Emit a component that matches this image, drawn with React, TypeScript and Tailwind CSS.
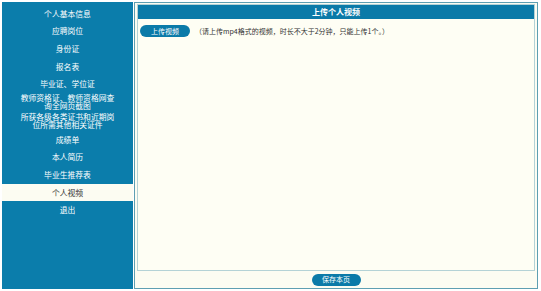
import React from "react";

const items: { label: string; lines?: string[] }[] = [
  { label: "个人基本信息" },
  { label: "应聘岗位" },
  { label: "身份证" },
  { label: "报名表" },
  { label: "毕业证、学位证" },
  { label: "", lines: ["教师资格证、教师资格网查", "询全网页截图"] },
  { label: "", lines: ["所获各级各类证书和近期岗", "位所需其他相关证件"] },
  { label: "成绩单" },
  { label: "本人简历" },
  { label: "毕业生推荐表" },
  { label: "个人视频" },
  { label: "退出" },
];

export default function App() {
  const font = { fontFamily: '"Noto Sans CJK SC", "Noto Sans", sans-serif' };
  return (
    <div
      className="w-[541px] h-[291px] bg-white pt-[2px] pl-[2px] pr-[3px] pb-[2px] flex"
      style={font}
    >
      <aside className="w-[131px] h-full bg-[#0b7dab] pt-[3px] flex flex-col">
        {items.map((it, i) => {
          const selected = i === 10;
          return (
            <div
              key={i}
              className={
                "flex items-center justify-center text-center text-[7.8px] " +
                (it.lines ? "h-[19px] leading-[8.7px] " : "h-[17.6px] leading-[8px] ") +
                (selected ? "bg-[#fcfcf2] text-[#333]" : "text-white")
              }
            >
              {it.lines ? (
                <span>
                  {it.lines[0]}
                  <br />
                  {it.lines[1]}
                </span>
              ) : (
                <span>{it.label}</span>
              )}
            </div>
          );
        })}
      </aside>
      <main className="flex-1 h-full ml-[1px] border border-[#5e9fb2] bg-[#fcfcf2] pt-[1px] px-[2px] flex flex-col">
        <section className="h-[267px] border border-[#b4d2d6] bg-[#fefef4] flex flex-col">
          <div className="h-[14px] bg-[#0b7aa8] flex items-center justify-center text-white text-[8px] font-bold">
            上传个人视频
          </div>
          <div className="flex items-center mt-[6px] ml-[2px] gap-[5px]">
            <button className="w-[50px] h-[12px] rounded-full bg-[#0b7aa8] text-white text-[7px] leading-none flex items-center justify-center">
              上传视频
            </button>
            <span className="text-[7px] text-[#333] leading-none">
              （请上传mp4格式的视频，时长不大于2分钟，只能上传1个。）
            </span>
          </div>
        </section>
        <div className="flex-1 flex items-center justify-center">
          <button className="w-[49px] h-[12px] rounded-full bg-[#0b7aa8] text-white text-[7px] leading-none flex items-center justify-center">
            保存本页
          </button>
        </div>
      </main>
    </div>
  );
}
